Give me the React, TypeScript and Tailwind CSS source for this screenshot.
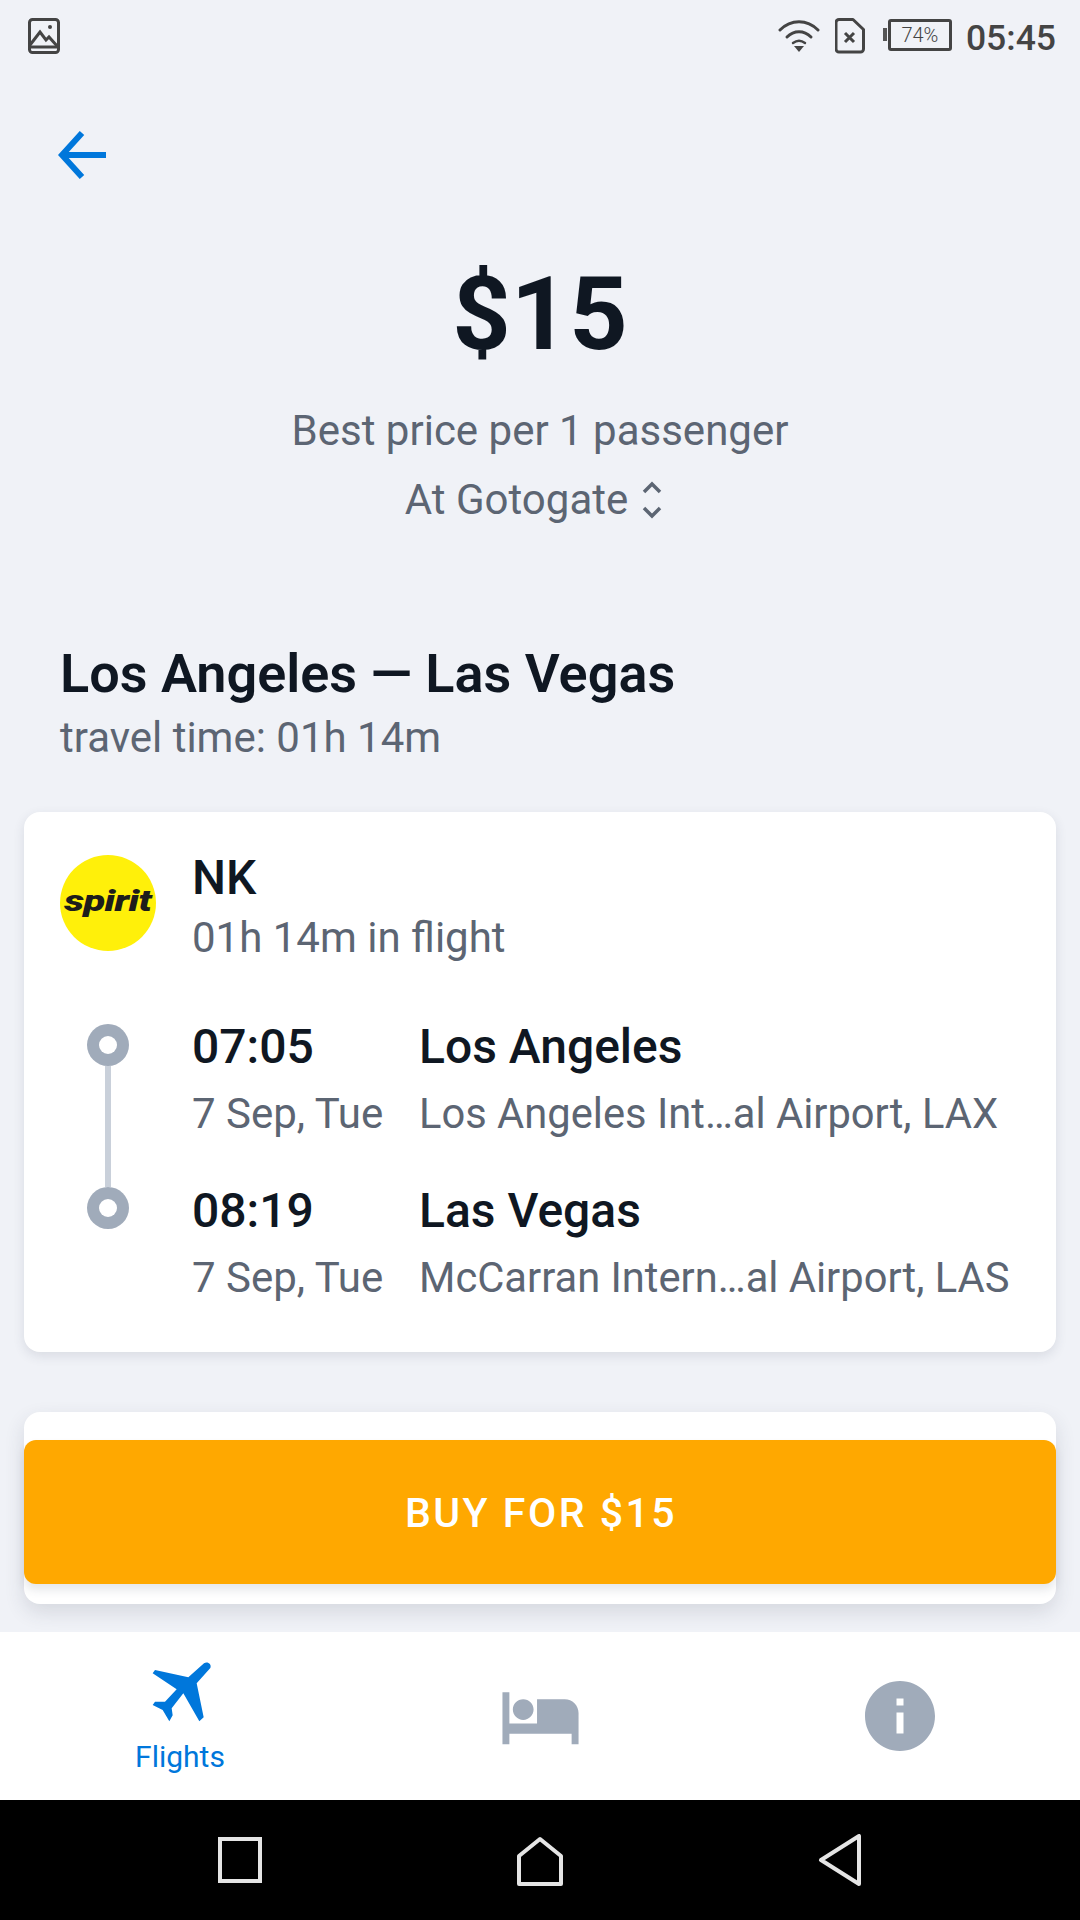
import { MdHotel, MdInfo } from "react-icons/md";

const FONT = "font-['Roboto',sans-serif]";

const StatusBar = () => (
  <div className="h-[72px] flex items-start justify-between pl-[28px] pr-[24px] pt-[18px] text-[#444]">
    <svg width="32" height="36" viewBox="0 0 32 36" fill="none" stroke="#444" strokeWidth="3">
      <rect x="1.5" y="1.5" width="29" height="33" rx="3" />
      <path d="M2 27l10-13 6 8 3-3 9 10" />
      <path d="M2 29h28" />
      <circle cx="22" cy="9" r="2" fill="#444" stroke="none" />
    </svg>
    <div className="flex items-start">
      <svg width="42" height="34" viewBox="0 0 42 34" fill="none" stroke="#444" strokeWidth="3" strokeLinecap="round" className="mt-[1px]">
        <path d="M2 11C13 0 29 0 40 11" />
        <path d="M9 18c7-7 17-7 24 0" />
        <path d="M15 24c4-3 8-3 12 0" strokeWidth="2.5" />
        <path d="M16 27h10l-5 6z" fill="#444" stroke="none" />
      </svg>
      <svg width="30" height="36" viewBox="0 0 30 36" fill="none" stroke="#444" strokeWidth="3" className="ml-[15px]">
        <path d="M4 1.5h14l10.500 10V31a3 3 0 0 1-3 3H4a3 3 0 0 1-3-3V4.500a3 3 0 0 1 3-3z" strokeLinejoin="round" />
        <path d="M10 15l9 9M19 15l-9 9" />
      </svg>
      <div className="ml-[18px] mt-[10px] w-[4px] h-[13px] bg-[#555]" />
      <div className="ml-[1px] mt-[1px] w-[64px] h-[32px] border-[3px] border-[#444] rounded-[3px] flex items-center justify-center text-[20px] leading-none font-light">
        <span className={FONT}>74%</span>
      </div>
      <span className={`${FONT} ml-[14px] text-[35.5px] leading-[36px] font-medium mt-[2px]`}>05:45</span>
    </div>
  </div>
);

const Stop = ({ time, city, date, airport }: { time: string; city: string; date: string; airport: string }) => (
  <div className="flex h-[164px]">
    <div className="w-[227px] shrink-0">
      <div className="text-[48px] leading-[56px] font-medium text-[#0f1722]">{time}</div>
      <div className="text-[42px] leading-[48px] mt-[15px] text-[#5c6573]">{date}</div>
    </div>
    <div>
      <div className="text-[48px] leading-[56px] font-medium text-[#0f1722]">{city}</div>
      <div className="text-[41.7px] leading-[48px] mt-[15px] text-[#5c6573] whitespace-nowrap">{airport}</div>
    </div>
  </div>
);

const Dot = () => (
  <div className="w-[42px] h-[42px] rounded-full bg-[#a0abba] flex items-center justify-center">
    <div className="w-[18px] h-[18px] rounded-full bg-white" />
  </div>
);

export default function App() {
  return (
    <div className={`${FONT} relative w-[1080px] h-[1920px] overflow-hidden bg-[#f0f2f7] flex flex-col`}>
      <StatusBar />

      <div className="flex-1 min-h-0">
        <div className="pl-[58px] pt-[59px] h-[118px]">
          <svg width="48" height="48" viewBox="0 0 48 48" fill="none" stroke="#0077db" strokeWidth="6">
            <path d="M24 2L4 24l20 22" />
            <path d="M4 24h44" />
          </svg>
        </div>

        <div className="text-center">
          <div className="mt-[64px] text-[102px] leading-[120px] font-bold text-[#0f1722]">$15</div>
          <div className="mt-[33px] text-[42px] leading-[48px] text-[#5c6573]">Best price per 1 passenger</div>
          <div className="mt-[21px] pr-[13px] flex items-center justify-center text-[42px] leading-[48px] text-[#5c6573]">
            <span>At Gotogate</span>
            <svg width="20" height="38" viewBox="0 0 20 38" fill="none" stroke="#5c6573" strokeWidth="3.500" className="ml-[14px]">
              <path d="M2 11l8-8 8 8" />
              <path d="M2 27l8 8 8-8" />
            </svg>
          </div>
        </div>

        <div className="mt-[120px] pl-[60px]">
          <div className="text-[54px] leading-[60px] font-semibold text-[#0f1722]">Los Angeles — Las Vegas</div>
          <div className="mt-[10px] text-[42px] leading-[48px] text-[#5c6573]">travel time: 01h 14m</div>
        </div>

        <div className="mt-[50px] mx-[24px] h-[540px] bg-white rounded-[16px] shadow-[0_4px_12px_rgba(50,60,80,0.12)] px-[36px] pt-[43px]">
          <div className="flex">
            <div className="w-[96px] h-[96px] rounded-full bg-[#fff00a] flex items-center justify-center overflow-hidden shrink-0">
              <span className="text-[30px] leading-none font-black italic tracking-[-0.5px] text-[#1d1d1b] scale-x-[1.33] -mt-[5px]">spirit</span>
            </div>
            <div className="ml-[36px] -mt-[5px]">
              <div className="text-[48px] leading-[56px] font-medium text-[#0f1722]">NK</div>
              <div className="text-[42px] leading-[48px] mt-[8px] text-[#5c6573]">01h 14m in flight</div>
            </div>
          </div>

          <div className="flex mt-[62px]">
            <div className="w-[132px] shrink-0 pl-[27px]">
              <div className="w-[42px] flex flex-col items-center">
                <Dot />
                <div className="w-[6px] h-[121px] bg-[#c9d0da]" />
                <Dot />
              </div>
            </div>
            <div className="-mt-[5px]">
              <Stop time="07:05" city="Los Angeles" date="7 Sep, Tue" airport="Los Angeles Int…al Airport, LAX" />
              <Stop time="08:19" city="Las Vegas" date="7 Sep, Tue" airport="McCarran Intern…al Airport, LAS" />
            </div>
          </div>
        </div>

        <div className="mt-[60px] mx-[24px] h-[192px] bg-white rounded-[16px] shadow-[0_8px_20px_rgba(50,60,80,0.14)]" />
      </div>

      <button className="absolute left-[24px] top-[1440px] w-[1032px] h-[144px] pt-[4px] pl-[2px] rounded-[12px] bg-[#ffa800] text-white text-[41px] font-medium tracking-[2.5px] shadow-[0_6px_10px_rgba(50,60,80,0.12)]">
        BUY FOR $15
      </button>

      <nav className="relative h-[168px] bg-white grid grid-cols-3 shrink-0">
        <div className="flex flex-col items-center pt-[28px]">
          <svg width="64" height="64" viewBox="60 30 192 192" fill="#0077db" className="ml-[3px]">
            <path d="M75 60L175 82 222 40C232 33 246 42 241 54L200 100 221 202 208 214 160 130 125 175 128 196 118 214 98 180 68 165 75 155 105 155 140 118 68 70z" />
          </svg>
          <span className="mt-[15px] text-[30px] leading-[36px] text-[#0077db]">Flights</span>
        </div>
        <div className="flex justify-center pt-[43px]">
          <MdHotel size={83} color="#a0abba" />
        </div>
        <div className="flex justify-center pt-[42px]">
          <MdInfo size={84} color="#a0abba" />
        </div>
      </nav>

      <div className="h-[120px] bg-black shrink-0 flex items-start justify-between pl-[218px] pr-[218px] pt-[34px]">
        <svg width="44" height="46" viewBox="0 0 44 46" fill="none" stroke="#e5e5e5" strokeWidth="4" className="mt-[3px]">
          <rect x="2" y="2" width="40" height="42" />
        </svg>
        <svg width="46" height="50" viewBox="0 0 46 50" fill="none" stroke="#e5e5e5" strokeWidth="4" strokeLinejoin="round" className="mt-[2px]">
          <path d="M2 20L23 3l21 17v28H2z" />
        </svg>
        <svg width="44" height="52" viewBox="0 0 44 52" fill="none" stroke="#e5e5e5" strokeWidth="4" strokeLinejoin="round">
          <path d="M41 2v48L3 26z" />
        </svg>
      </div>
    </div>
  );
}
